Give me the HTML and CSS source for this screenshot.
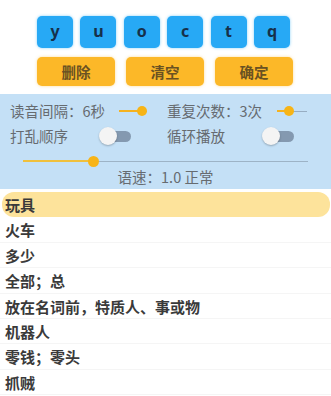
FILE: index.html
```html
<!DOCTYPE html>
<html lang="zh">
<head>
<meta charset="utf-8">
<link rel="stylesheet" href="styles.css">
</head>
<body>
<div class="keys">
  <div class="key">y</div>
  <div class="key">u</div>
  <div class="key">o</div>
  <div class="key">c</div>
  <div class="key">t</div>
  <div class="key">q</div>
</div>
<div class="actions">
  <div class="act">删除</div>
  <div class="act">清空</div>
  <div class="act">确定</div>
</div>
<div class="panel">
  <div class="row">
    <div class="cell c1"><span class="lbl">读音间隔：6秒</span>
      <div class="mini s1"><span class="fill" style="width:22px"></span><span class="thumb"></span><span class="rest"></span></div>
    </div>
    <div class="cell c2"><span class="lbl">重复次数：3次</span>
      <div class="mini s2"><span class="fill" style="width:11px"></span><span class="thumb"></span><span class="rest"></span></div>
    </div>
  </div>
  <div class="row row2">
    <div class="cell c1"><span class="lbl">打乱顺序</span><div class="toggle t1"><span class="track"></span><span class="knob"></span></div></div>
    <div class="cell c2"><span class="lbl">循环播放</span><div class="toggle t2"><span class="track"></span><span class="knob"></span></div></div>
  </div>
  <div class="big">
    <span class="bfill" style="width:70px"></span><span class="bthumb"></span><span class="brest"></span>
  </div>
  <div class="speed">语速：1.0 正常</div>
</div>
<ul class="list">
  <li class="item active">玩具</li>
  <li class="item">火车</li>
  <li class="item">多少</li>
  <li class="item">全部；总</li>
  <li class="item">放在名词前，特质人、事或物</li>
  <li class="item">机器人</li>
  <li class="item">零钱；零头</li>
  <li class="item">抓贼</li>
</ul>
</body>
</html>
```
FILE: styles.css
```css
* { box-sizing: border-box; }
html, body { margin: 0; padding: 0; background: #fff; }
body {
  width: 331px;
  height: 396px;
  overflow: hidden;
  font-family: "Noto Sans CJK SC", "Noto Sans", sans-serif;
}
.keys {
  display: flex;
  gap: 7.4px;
  padding: 16px 0 0 37px;
}
.key {
  width: 36px;
  height: 32px;
  border-radius: 5px;
  background: #27a9f5;
  box-shadow: 0 0 3px rgba(39,169,245,0.55);
  display: flex;
  align-items: center;
  justify-content: center;
  font-family: "Noto Sans", sans-serif;
  font-weight: 700;
  font-size: 16px;
  color: #16304a;
  padding-bottom: 2px;
}
.actions {
  display: flex;
  gap: 11px;
  padding: 9px 0 0 37px;
}
.act {
  width: 78px;
  height: 29px;
  border-radius: 5px;
  background: #fcb828;
  box-shadow: 0 0 3px rgba(252,184,40,0.5);
  display: flex;
  align-items: center;
  justify-content: center;
  font-size: 14.5px;
  font-weight: 700;
  color: #6a5222;
}
.panel {
  margin-top: 8px;
  height: 95px;
  background: #c4e0f6;
  padding: 6px 0 0 0;
  color: #666b70;
  font-size: 14.5px;
}
.row {
  display: flex;
  height: 22px;
  align-items: center;
}
.row2 { margin-top: 3px; }
.cell {
  display: flex;
  align-items: center;
  height: 22px;
}
.c1 { width: 167px; padding-left: 10px; }
.c2 { padding-left: 0; }
.lbl { line-height: 22px; white-space: nowrap; }
.mini {
  display: flex;
  align-items: center;
  height: 12px;
}
.s1 { margin-left: 14px; width: 28px; }
.s2 { margin-left: 15px; width: 30px; }
.mini .fill { height: 2px; background: #f5b21f; }
.mini .thumb {
  width: 10px; height: 10px; border-radius: 50%;
  background: #f7b416;
  margin: 0 -4px;
  position: relative;
  z-index: 1;
}
.mini .rest { flex: 1; height: 1px; background: #97adc2; }
.toggle {
  position: relative;
  width: 32px;
  height: 18px;
}
.t1 { margin-left: 31px; }
.t2 { margin-left: 37px; }
.toggle .track {
  position: absolute;
  left: 8px; top: 4px;
  width: 24px; height: 11px;
  border-radius: 6px;
  background: #8499b0;
}
.toggle .knob {
  position: absolute;
  left: 0; top: 0;
  width: 18px; height: 18px;
  border-radius: 50%;
  background: #f4f4f4;
  box-shadow: 0 1px 2px rgba(0,0,0,0.25);
}
.big {
  margin: 8px 0 0 23px;
  width: 285px;
  height: 12px;
  display: flex;
  align-items: center;
}
.bfill { height: 2px; background: #f0c03c; }
.bthumb {
  width: 11px; height: 11px; border-radius: 50%;
  background: #f8b417;
  margin: 0 -1px 0 -5px;
  position: relative; z-index: 1;
}
.brest { flex: 1; height: 1px; background: #9db3c6; }
.speed {
  text-align: center;
  height: 20px;
  line-height: 20px;
  font-size: 14.5px;
}
.list {
  list-style: none;
  margin: 3px 0 0 0;
  padding: 0;
}
.item {
  height: 25.4px;
  line-height: 25.4px;
  padding-left: 5px;
  font-size: 15px;
  font-weight: 700;
  color: #3a3a3a;
  white-space: nowrap;
  border-bottom: 1px solid #f5f5f5;
}
.item.active {
  background: #fde39b;
  border-radius: 12px;
  margin: 0 1px 0 2px;
  padding-left: 3px;
  border-bottom: none;
}
```
